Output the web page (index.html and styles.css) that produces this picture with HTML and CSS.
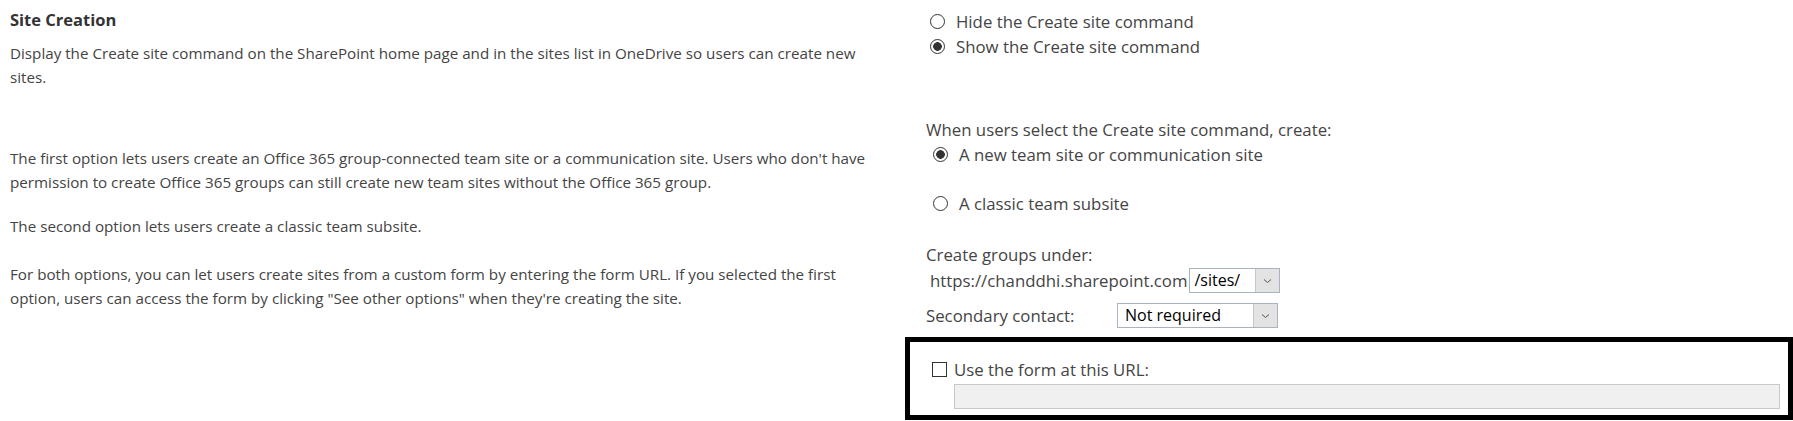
FILE: index.html
```html
<!DOCTYPE html>
<html>
<head>
<meta charset="utf-8">
<link rel="stylesheet" href="styles.css">
</head>
<body>
<div class="page">
  <div class="left">
    <div class="title">Site Creation</div>
    <p class="desc first">Display the Create site command on the SharePoint home page and in the sites list in OneDrive so users can create new<br>sites.</p>
    <p class="desc p2">The first option lets users create an Office 365 group-connected team site or a communication site. Users who don't have<br>permission to create Office 365 groups can still create new team sites without the Office 365 group.</p>
    <p class="desc p3">The second option lets users create a classic team subsite.</p>
    <p class="desc p4">For both options, you can let users create sites from a custom form by entering the form URL. If you selected the first<br>option, users can access the form by clicking "See other options" when they're creating the site.</p>
  </div>
  <div class="right">
    <div class="group g1">
      <div class="opt"><span class="radio"></span><span>Hide the Create site command</span></div>
      <div class="opt"><span class="radio checked"></span><span>Show the Create site command</span></div>
    </div>
    <div class="label when">When users select the Create site command, create:</div>
    <div class="group g2">
      <div class="opt"><span class="radio checked"></span><span>A new team site or communication site</span></div>
      <div class="opt gap"><span class="radio"></span><span>A classic team subsite</span></div>
    </div>
    <div class="label groups">Create groups under:</div>
    <div class="urlrow">
      <span class="domain">https://chanddhi.sharepoint.com</span>
      <div class="select small"><span class="val">/sites/</span><span class="btn"><svg width="9" height="6" viewBox="0 0 9 6"><path d="M1 1.5 L4.5 4.5 L8 1.5" fill="none" stroke="#555" stroke-width="1"/></svg></span></div>
    </div>
    <div class="contactrow">
      <span class="clabel">Secondary contact:</span>
      <div class="select wide"><span class="val">Not required</span><span class="btn"><svg width="9" height="6" viewBox="0 0 9 6"><path d="M1 1.5 L4.5 4.5 L8 1.5" fill="none" stroke="#555" stroke-width="1"/></svg></span></div>
    </div>
    <div class="formbox">
      <div class="opt"><span class="check"></span><span>Use the form at this URL:</span></div>
      <div class="urlinput"></div>
    </div>
  </div>
</div>
</body>
</html>
```

FILE: styles.css
```css
html, body {
  margin: 0;
  padding: 0;
  background: #fff;
}
body {
  font-family: "Open Sans", "Noto Sans", sans-serif;
  overflow: hidden;
  width: 1793px;
  height: 421px;
}
.page {
  display: grid;
  grid-template-columns: 905px 888px;
}
.left {
  padding: 8px 0 0 10px;
  color: #444;
}
.title {
  font-size: 16.5px;
  font-weight: 700;
  color: #333;
  line-height: 24px;
}
.desc {
  margin: 0;
  font-size: 15.2px;
  line-height: 24px;
  white-space: nowrap;
}
.desc.first { margin-top: 9px; }
.desc.p2 { margin-top: 57px; }
.desc.p3 { margin-top: 20px; }
.desc.p4 { margin-top: 24px; }

.right {
  display: flex;
  flex-direction: column;
  color: #444;
  font-size: 16.8px;
}
.group {
  display: flex;
  flex-direction: column;
}
.g1 {
  padding: 9px 0 0 25px;
}
.opt {
  display: flex;
  align-items: center;
  gap: 11px;
  height: 25px;
}
.radio {
  width: 15px;
  height: 15px;
  border: 1.3px solid #333;
  border-radius: 50%;
  box-sizing: border-box;
  background: #fff;
  flex: none;
}
.radio.checked {
  background: radial-gradient(circle, #333 0 4px, #fff 4.6px);
}
.label {
  padding-left: 21px;
  height: 25px;
  line-height: 25px;
}
.when {
  margin-top: 58px;
}
.g2 {
  padding-left: 28px;
}
.opt.gap {
  margin-top: 24px;
}
.groups {
  margin-top: 26px;
}
.urlrow {
  display: flex;
  align-items: center;
  padding-left: 25px;
  height: 27px;
}
.domain {
  margin-right: 1px;
}
.select {
  display: flex;
  align-items: stretch;
  border: 1px solid #a9b3c1;
  box-sizing: border-box;
  height: 25px;
  color: #000;
  font-size: 16px;
  background: #fff;
}
.select .val {
  flex: 1;
  padding-left: 5px;
  line-height: 22px;
}
.select.wide .val {
  padding-left: 7px;
}
.select .btn {
  width: 23px;
  background: #e3e3e3;
  border-left: 1px solid #c7c7c7;
  display: flex;
  align-items: center;
  justify-content: center;
}
.select.small {
  width: 91px;
}
.select.wide {
  width: 161px;
}
.contactrow {
  display: flex;
  align-items: center;
  padding-left: 21px;
  height: 25px;
  margin-top: 9px;
}
.clabel {
  width: 191px;
}
.formbox {
  margin-top: 9px;
  border: 5px solid #000;
  height: 83px;
  padding: 16px 0 0 22px;
  box-sizing: border-box;
  display: flex;
  flex-direction: column;
}
.formbox .opt {
  gap: 7px;
  height: 22px;
}
.check {
  width: 15px;
  height: 15px;
  border: 1px solid #333;
  box-sizing: border-box;
  flex: none;
  background: #fff;
}
.urlinput {
  margin: 4px 0 0 22px;
  width: 826px;
  height: 25px;
  background: #f0f0f0;
  border: 1px solid #c8c8c8;
  box-sizing: border-box;
}
```
